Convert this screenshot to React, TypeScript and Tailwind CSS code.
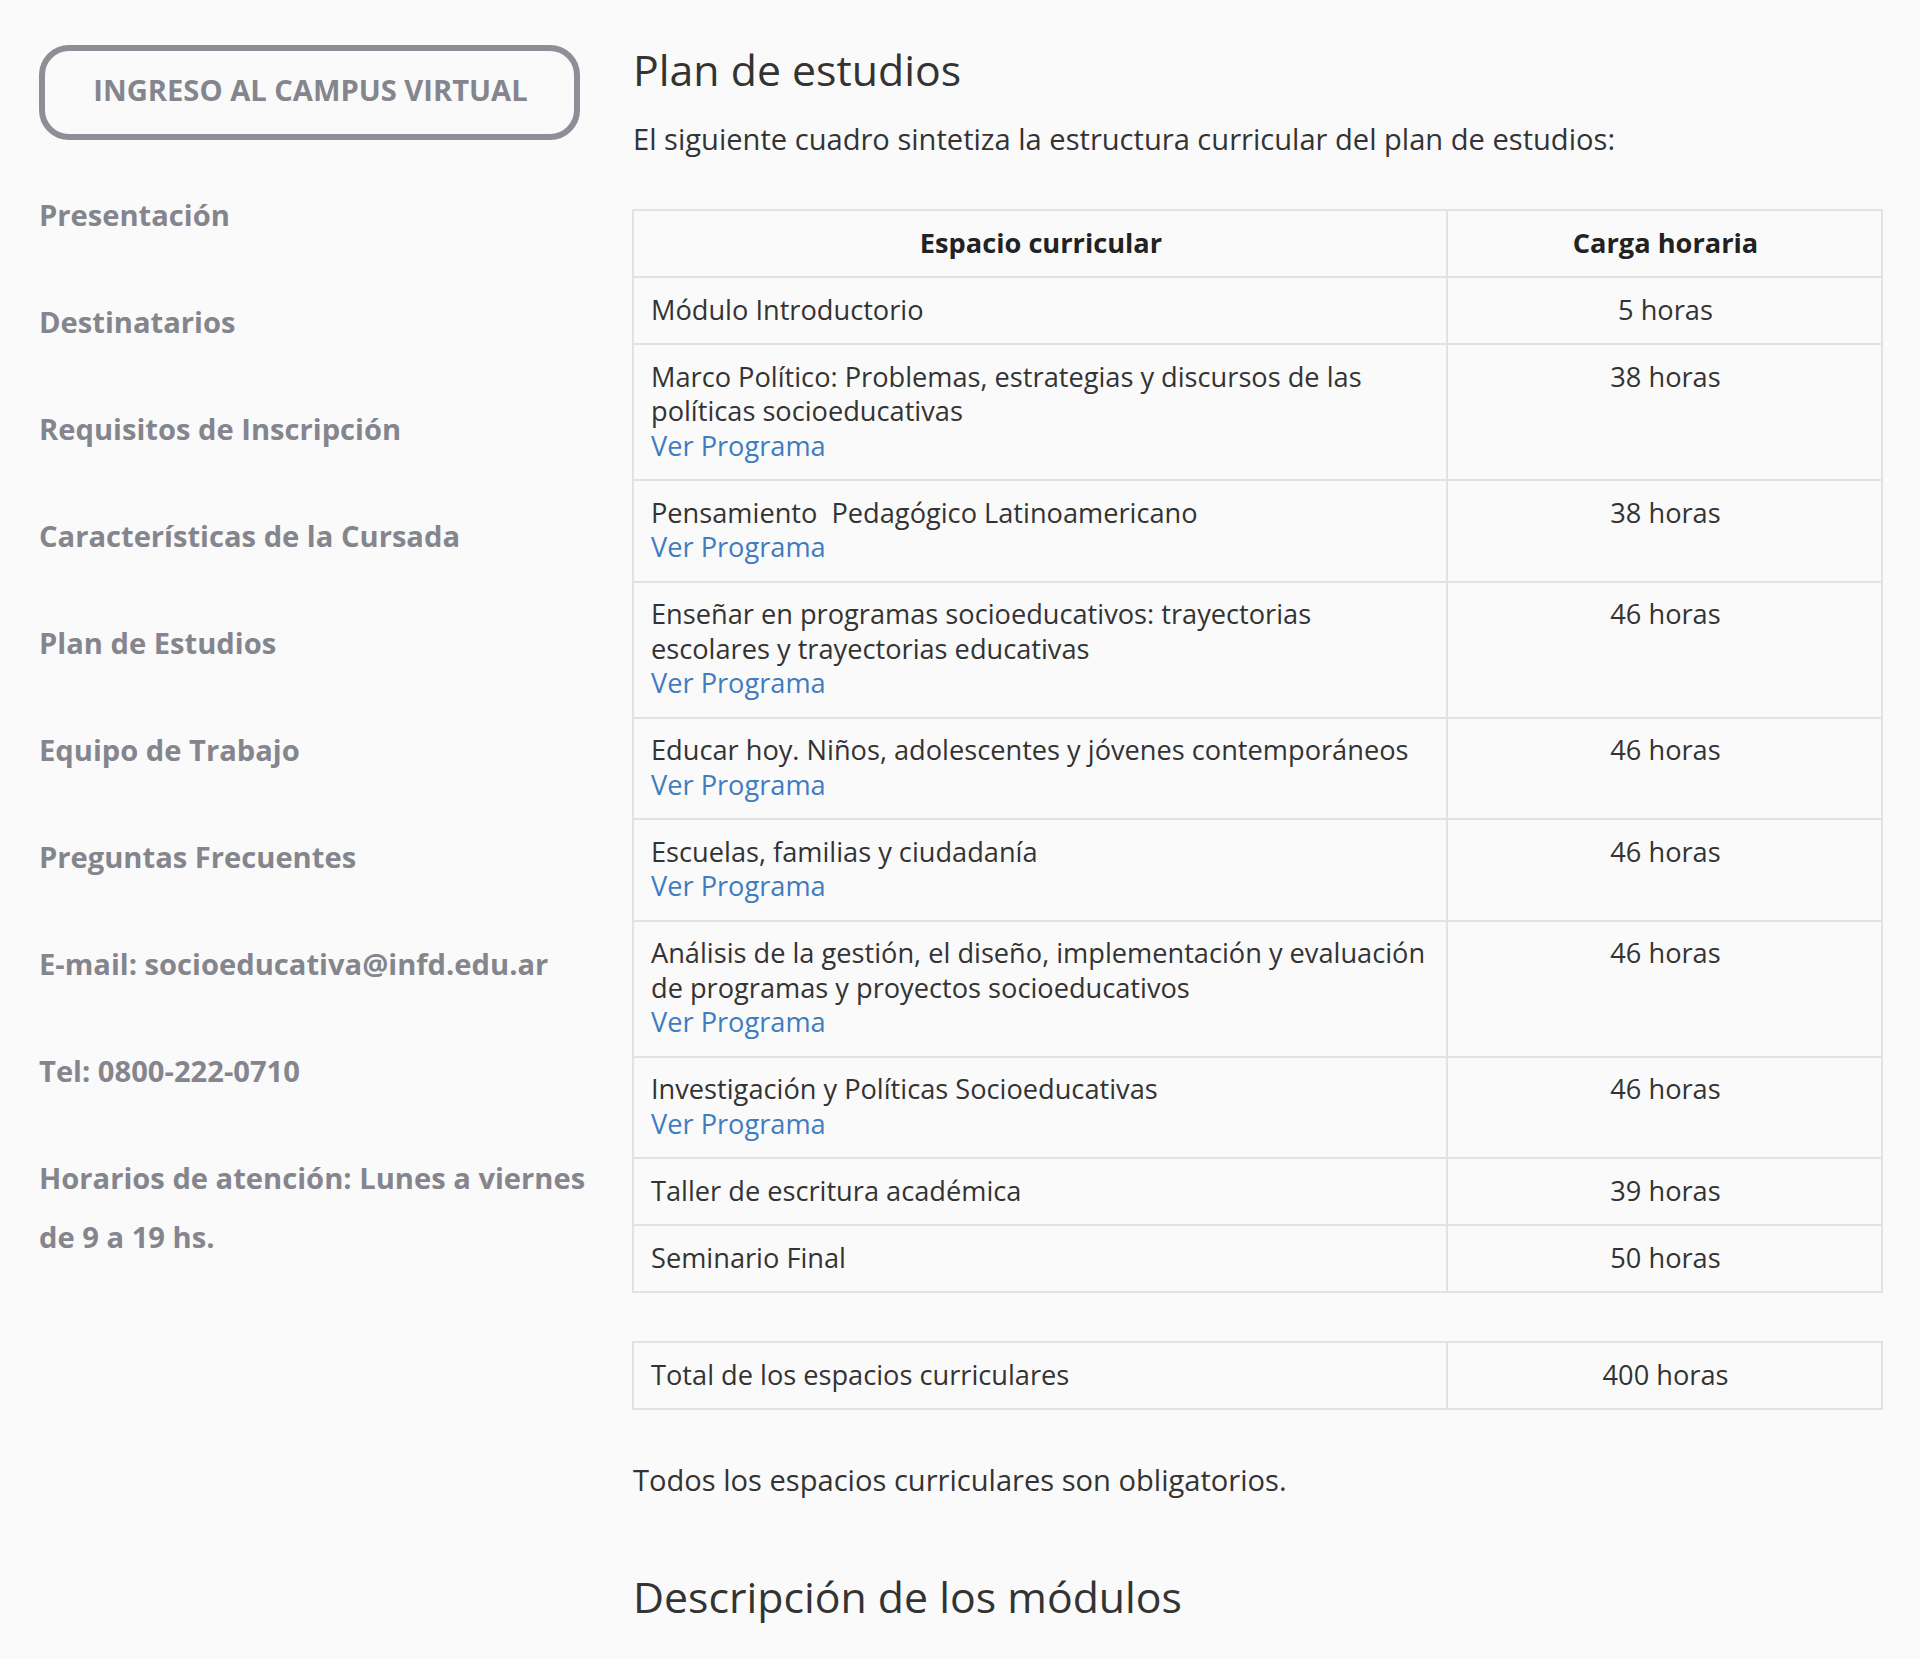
const menu = [
  "Presentación",
  "Destinatarios",
  "Requisitos de Inscripción",
  "Características de la Cursada",
  "Plan de Estudios",
  "Equipo de Trabajo",
  "Preguntas Frecuentes",
  "E-mail: socioeducativa@infd.edu.ar",
  "Tel: 0800-222-0710",
  "Horarios de atención: Lunes a viernes de 9 a 19 hs.",
];

const rows: { name: string[]; hours: string; link?: boolean }[] = [
  { name: ["Módulo Introductorio"], hours: "5 horas" },
  { name: ["Marco Político: Problemas, estrategias y discursos de las", "políticas socioeducativas"], hours: "38 horas", link: true },
  { name: ["Pensamiento  Pedagógico Latinoamericano"], hours: "38 horas", link: true },
  { name: ["Enseñar en programas socioeducativos: trayectorias", "escolares y trayectorias educativas"], hours: "46 horas", link: true },
  { name: ["Educar hoy. Niños, adolescentes y jóvenes contemporáneos"], hours: "46 horas", link: true },
  { name: ["Escuelas, familias y ciudadanía"], hours: "46 horas", link: true },
  { name: ["Análisis de la gestión, el diseño, implementación y evaluación", "de programas y proyectos socioeducativos"], hours: "46 horas", link: true },
  { name: ["Investigación y Políticas Socioeducativas"], hours: "46 horas", link: true },
  { name: ["Taller de escritura académica"], hours: "39 horas" },
  { name: ["Seminario Final"], hours: "50 horas" },
];

const cell = "border-2 border-[#e2e2e2] pt-[14.5px] pb-[16px] align-top";
const left = cell + " pl-[17px] pr-[17px]";
const center = cell + " pl-[19px] pr-[17px] text-center";

export default function App() {
  return (
    <div className="h-[1659px] overflow-hidden bg-[#fafafa] font-['Open_Sans',sans-serif] text-[#333] flex">
      <aside className="w-[632px] shrink-0 pl-[39px] pr-[30px] pt-[45px]">
        <a className="flex items-center justify-center w-[541px] h-[95px] pb-[4px] pl-[2px] border-[6px] border-[#8e8e98] rounded-[30px] text-[29.15px] font-bold text-[#85858e]">
          INGRESO AL CAMPUS VIRTUAL
        </a>
        <ul className="mt-[45.5px] flex flex-col gap-[48px]">
          {menu.map((m) => (
            <li key={m} className="text-[29.15px] leading-[59px] font-bold text-[#85858e]">
              {m}
            </li>
          ))}
        </ul>
      </aside>

      <main className="w-[1251px] shrink-0">
        <h2 className="mt-[42.5px] ml-px text-[42.8px] leading-[54px] text-[#333]">Plan de estudios</h2>
        <p className="mt-[22.5px] ml-px text-[29.1px] leading-[40px]">
          El siguiente cuadro sintetiza la estructura curricular del plan de estudios:
        </p>

        <table className="mt-[50px] w-full border-collapse table-fixed text-[27.2px] leading-[34.5px]">
          <colgroup>
            <col className="w-[814px]" />
            <col />
          </colgroup>
          <thead>
            <tr>
              <th className={center + " font-bold text-[#222]"}>Espacio curricular</th>
              <th className={center + " font-bold text-[#222]"}>Carga horaria</th>
            </tr>
          </thead>
          <tbody>
            {rows.map((r) => (
              <tr key={r.name[0]}>
                <td className={left + " whitespace-pre"}>
                  {r.name.map((l) => (
                    <div key={l}>{l}</div>
                  ))}
                  {r.link && <a className="block text-[#3f7cc0]">Ver Programa</a>}
                </td>
                <td className={center}>{r.hours}</td>
              </tr>
            ))}
          </tbody>
        </table>

        <table className="mt-[48px] w-full border-collapse table-fixed text-[27.2px] leading-[34.5px]">
          <colgroup>
            <col className="w-[814px]" />
            <col />
          </colgroup>
          <tbody>
            <tr>
              <td className={left}>Total de los espacios curriculares</td>
              <td className={center}>400 horas</td>
            </tr>
          </tbody>
        </table>

        <p className="mt-[50px] ml-px text-[29.1px] leading-[40px]">Todos los espacios curriculares son obligatorios.</p>
        <h2 className="mt-[70px] ml-px text-[42.8px] leading-[54px]">Descripción de los módulos</h2>
      </main>
    </div>
  );
}
